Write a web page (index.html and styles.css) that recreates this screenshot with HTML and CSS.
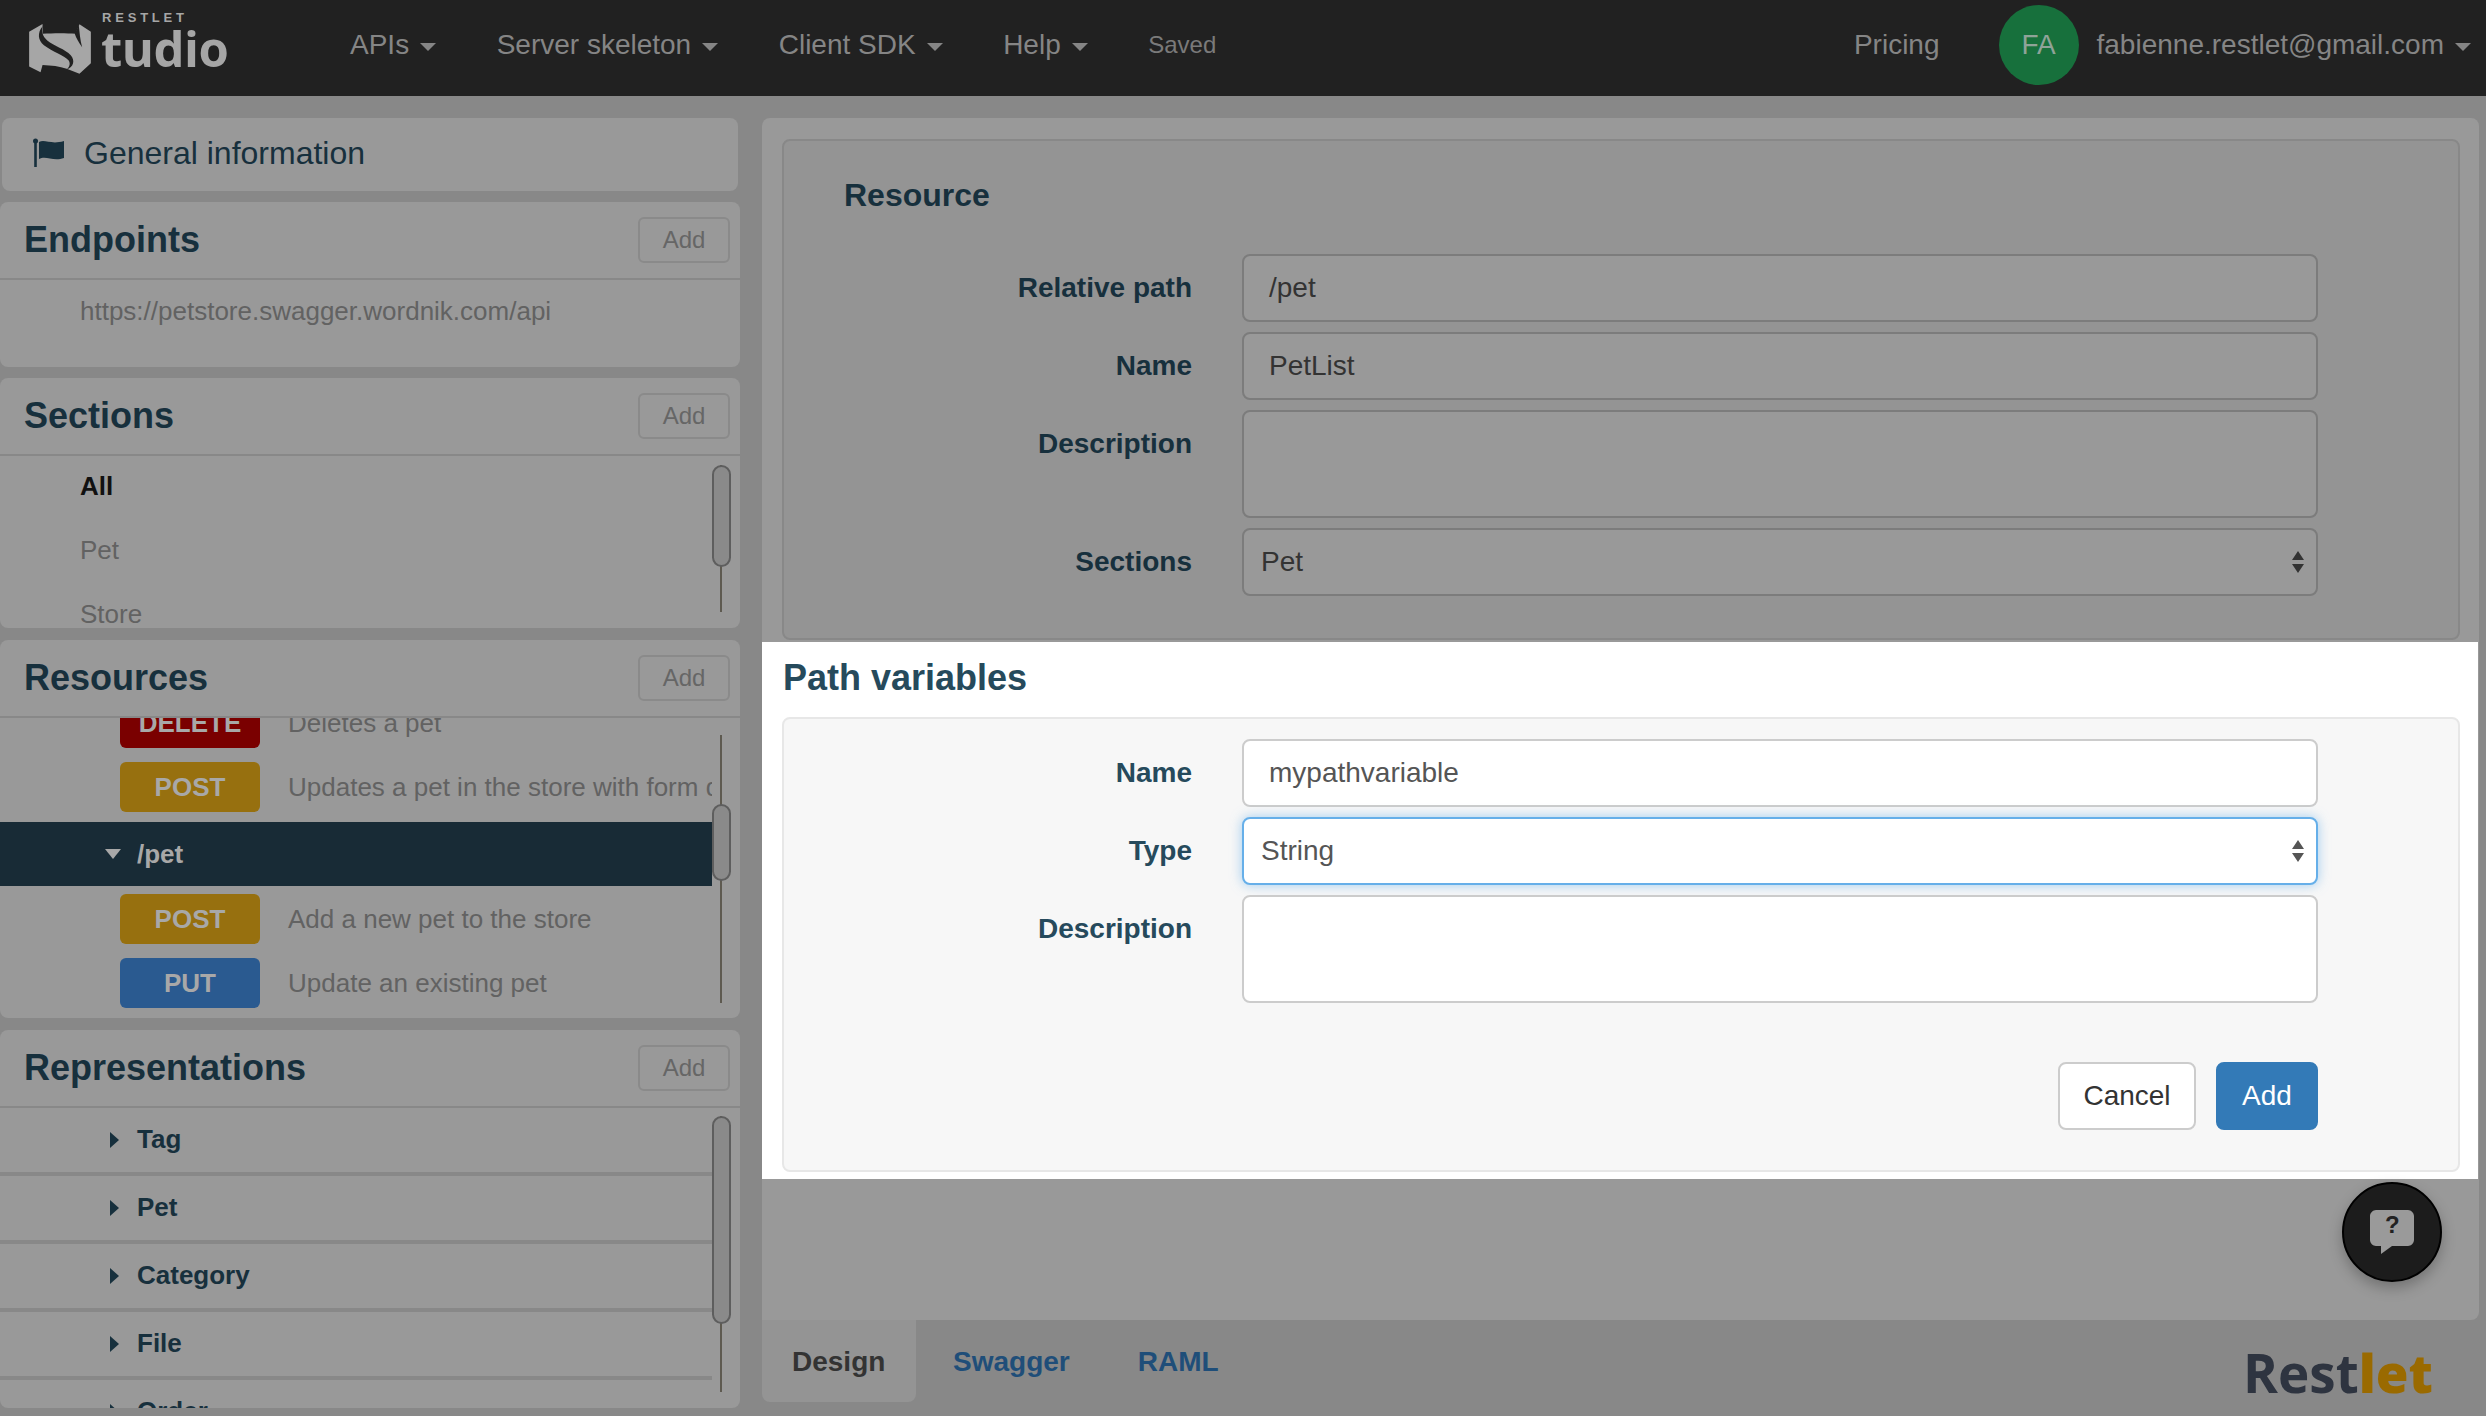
FILE: index.html
```html
<!DOCTYPE html>
<html lang="en">
<head>
  <meta charset="UTF-8">
  <title>Restlet Studio</title>
  <link rel="stylesheet" href="styles.css">
</head>
<body>
  <header class="topbar">
    <a class="logo">
      <svg class="logo-mark" viewBox="25 40 190 152">
        <path fill="#a6a6a6" d="M68 43L28 66V170L62 187L68 165C95 166 118 169 140 176L178 191L212 160V66L178 44L166 72C140 70 100 70 68 72Z"/>
        <path fill="#212121" d="M68 50C52 70 54 92 72 106C98 126 134 136 146 152C152 162 148 172 140 178C160 172 166 152 152 136C136 118 102 108 82 92C68 80 64 66 68 50Z"/>
        <path fill="#212121" d="M176 46C178 66 180 92 186 112C176 98 168 84 164 72Z"/>
      </svg>
      <span class="logo-small">RESTLET</span>
      <span class="logo-big">tudio</span>
    </a>
    <nav class="nav">
      <span class="nav-item">APIs<i class="caret"></i></span>
      <span class="nav-item">Server skeleton<i class="caret"></i></span>
      <span class="nav-item">Client SDK<i class="caret"></i></span>
      <span class="nav-item">Help<i class="caret"></i></span>
      <span class="saved">Saved</span>
    </nav>
    <div class="user">
      <span class="pricing">Pricing</span>
      <span class="avatar">FA</span>
      <span class="nav-item">fabienne.restlet@gmail.com<i class="caret"></i></span>
    </div>
  </header>

  <main class="layout">
    <aside class="sidebar">
      <div class="panel general">
        <svg class="flag" viewBox="0 0 32 30">
          <circle cx="2.5" cy="3" r="2.5" fill="#17303d"/>
          <rect x="1.2" y="3" width="2.6" height="26" fill="#17303d"/>
          <path fill="#17303d" d="M6 4C12 1 18 7 31 3V20C20 24 13 17 6 21Z"/>
        </svg>
        General information
      </div>

      <section class="panel endpoints">
        <div class="panel-head"><h2>Endpoints</h2><button class="btn-add">Add</button></div>
        <div class="plain-row">https://petstore.swagger.wordnik.com/api</div>
      </section>

      <section class="panel sections">
        <div class="panel-head"><h2>Sections</h2><button class="btn-add">Add</button></div>
        <div class="panel-body">
          <div class="plain-row selected">All</div>
          <div class="plain-row">Pet</div>
          <div class="plain-row">Store</div>
          <div class="scroll"><div class="thumb"></div></div>
        </div>
      </section>

      <section class="panel resources">
        <div class="panel-head"><h2>Resources</h2><button class="btn-add">Add</button></div>
        <div class="panel-body">
          <div class="res-list">
            <div class="method"><span class="badge delete">DELETE</span><span class="desc">Deletes a pet</span></div>
            <div class="method"><span class="badge post">POST</span><span class="desc">Updates a pet in the store with form data</span></div>
            <div class="res-active"><i class="caret-down"></i>/pet</div>
            <div class="method"><span class="badge post">POST</span><span class="desc">Add a new pet to the store</span></div>
            <div class="method"><span class="badge put">PUT</span><span class="desc">Update an existing pet</span></div>
          </div>
          <div class="scroll"><div class="thumb"></div></div>
        </div>
      </section>

      <section class="panel representations">
        <div class="panel-head"><h2>Representations</h2><button class="btn-add">Add</button></div>
        <div class="panel-body">
          <div class="rep-row"><i class="caret-right"></i>Tag</div>
          <div class="rep-row"><i class="caret-right"></i>Pet</div>
          <div class="rep-row"><i class="caret-right"></i>Category</div>
          <div class="rep-row"><i class="caret-right"></i>File</div>
          <div class="rep-row"><i class="caret-right"></i>Order</div>
          <div class="scroll"><div class="thumb"></div></div>
        </div>
      </section>
    </aside>

    <div class="content">
      <div class="editor">
        <div class="box box-dim">
          <h3 class="legend">Resource</h3>
          <div class="field"><label>Relative path</label><div class="input">/pet</div></div>
          <div class="field"><label>Name</label><div class="input">PetList</div></div>
          <div class="field"><label>Description</label><div class="input textarea"></div></div>
          <div class="field">
            <label>Sections</label>
            <div class="input select">Pet
              <svg class="updown" viewBox="0 0 12 22"><path d="M6 0L12 9H0ZM0 13H12L6 22Z"/></svg>
            </div>
          </div>
        </div>

        <div class="spot">
          <h2 class="spot-title">Path variables</h2>
          <div class="box box-light">
            <div class="field"><label>Name</label><div class="input">mypathvariable</div></div>
            <div class="field"><label>Type</label>
              <div class="input select focus">String
                <svg class="updown" viewBox="0 0 12 22"><path d="M6 0L12 9H0ZM0 13H12L6 22Z"/></svg>
              </div>
            </div>
            <div class="field"><label>Description</label><div class="input textarea"></div></div>
            <div class="actions">
              <button class="btn btn-cancel">Cancel</button>
              <button class="btn btn-primary">Add</button>
            </div>
          </div>
        </div>

        <a class="help">
          <svg viewBox="0 0 44 46" class="help-icon">
            <path fill="#9a9a9a" d="M6 0H38C41 0 44 3 44 6V30C44 33 41 36 38 36H22L11 44V36H6C3 36 0 33 0 30V6C0 3 3 0 6 0Z"/>
          </svg>
          <span class="help-mark">?</span>
        </a>
      </div>

      <div class="tabs">
        <span class="tab active">Design</span>
        <span class="tab swagger">Swagger</span>
        <span class="tab">RAML</span>
        <span class="brand">Rest<b>let</b></span>
      </div>
    </div>
  </main>
</body>
</html>
```

FILE: styles.css
```css
html, body {
  margin: 0;
  padding: 0;
  height: 1416px;
  overflow: hidden;
  background: #888;
  font-family: "Liberation Sans", Arial, sans-serif;
  font-size: 28px;
}

/* top bar */
.topbar {
  display: flex;
  align-items: center;
  box-sizing: border-box;
  height: 96px;
  padding-bottom: 6px;
  background: #212121;
  color: #858585;
}
.logo {
  position: relative;
  display: block;
  width: 322px;
  height: 90px;
  flex: none;
}
.logo-mark {
  position: absolute;
  left: 28px;
  top: 23px;
  width: 64px;
  height: 51px;
}
.logo-small {
  position: absolute;
  left: 102px;
  top: 11px;
  font-size: 13px;
  line-height: 14px;
  font-weight: bold;
  letter-spacing: 3.8px;
  color: #a6a6a6;
}
.logo-big {
  position: absolute;
  left: 101px;
  top: 28px;
  font-family: "Open Sans", sans-serif;
  font-size: 49px;
  line-height: 40px;
  font-weight: 700;
  letter-spacing: -.5px;
  color: #a6a6a6;
}
.nav {
  display: flex;
  align-items: center;
  gap: 60.5px;
  padding-left: 28px;
}
.nav-item {
  white-space: nowrap;
}
.caret {
  display: inline-block;
  margin-left: 11px;
  vertical-align: 3px;
  border-top: 8px solid #858585;
  border-left: 8px solid transparent;
  border-right: 8px solid transparent;
}
.saved {
  font-size: 24px;
  color: #7a7a7a;
}
.user {
  display: flex;
  align-items: center;
  margin-left: auto;
  padding-right: 15px;
}
.pricing {
  margin-right: 59px;
}
.avatar {
  display: flex;
  align-items: center;
  justify-content: center;
  width: 80px;
  height: 80px;
  margin-right: 18px;
  border-radius: 50%;
  background: #17703c;
  color: #8fa398;
}

/* sidebar */
.layout {
  display: flex;
  height: 1320px;
}
.sidebar {
  flex: none;
  width: 740px;
  margin-right: 22px;
  padding-top: 22px;
}
.panel {
  position: relative;
  overflow: hidden;
  margin-bottom: 11px;
  border-radius: 8px;
  background: #999;
}
.general {
  display: flex;
  align-items: center;
  box-sizing: border-box;
  height: 73px;
  margin-left: 2px;
  width: 736px;
  padding-bottom: 3px;
  font-size: 32px;
  color: #17303d;
}
.flag {
  width: 32px;
  height: 30px;
  margin: 0 19px 0 31px;
}
.endpoints { height: 165px; }
.sections { height: 250px; }
.resources { height: 378px; margin-top: 12px; }
.representations { height: 378px; margin-top: 12px; }
.panel-head {
  display: flex;
  align-items: center;
  justify-content: space-between;
  box-sizing: border-box;
  height: 78px;
  padding: 0 10px 0 24px;
  border-bottom: 2px solid #888;
}
.panel-head h2 {
  margin: 0;
  font-size: 36px;
  color: #17303d;
}
.btn-add {
  width: 92px;
  height: 46px;
  padding: 0;
  border: 2px solid #8a8a8a;
  border-radius: 6px;
  background: transparent;
  font: 24px "Liberation Sans", Arial, sans-serif;
  color: #666;
}
.panel-body {
  position: relative;
  height: 300px;
  overflow: hidden;
  font-size: 26px;
}
.plain-row {
  height: 64px;
  line-height: 62px;
  padding-left: 80px;
  font-size: 26px;
  color: #626262;
}
.sections .panel-body {
  height: 172px;
  margin-top: -1px;
}
.selected {
  font-weight: bold;
  color: #111;
}
.scroll {
  position: absolute;
  left: 720px;
  width: 2px;
  background: #5e5a50;
}
.thumb {
  position: absolute;
  left: -8px;
  box-sizing: border-box;
  width: 19px;
  border: 2px solid #5e5e5e;
  border-radius: 10px;
  background: #8a8a8a;
}
.sections .scroll { top: 10px; height: 147px; }
.sections .thumb { top: 0; height: 102px; }
.resources .scroll { top: 17px; height: 268px; }
.resources .thumb { top: 69px; height: 77px; }
.representations .scroll { top: 8px; height: 276px; }
.representations .thumb { top: 0; height: 208px; }

.res-list {
  width: 712px;
  height: 326px;
  margin-top: -27px;
  overflow: hidden;
}
.method {
  display: flex;
  align-items: center;
  height: 64px;
  padding-left: 120px;
  white-space: nowrap;
}
.badge {
  flex: none;
  width: 140px;
  height: 50px;
  margin-right: 28px;
  border-radius: 6px;
  line-height: 50px;
  text-align: center;
  font-weight: bold;
  color: #a8a8a8;
}
.delete { background: #7a0000; }
.post { background: #97700f; }
.put { background: #2a5a90; }
.desc { color: #626262; }
.res-active {
  display: flex;
  align-items: center;
  height: 64px;
  margin: 3px 0 1px;
  background: #182b36;
  font-weight: bold;
  color: #a8a8a8;
}
.caret-down {
  margin: 0 16px 0 105px;
  border-top: 10px solid #a8a8a8;
  border-left: 8px solid transparent;
  border-right: 8px solid transparent;
}
.rep-row {
  display: flex;
  align-items: center;
  box-sizing: border-box;
  width: 712px;
  height: 68px;
  padding-bottom: 1px;
  border-bottom: 4px solid #888;
  font-weight: bold;
  color: #17303d;
}
.caret-right {
  margin: 0 18px 0 110px;
  border-left: 9px solid #17303d;
  border-top: 8px solid transparent;
  border-bottom: 8px solid transparent;
}

/* right side */
.content {
  display: flex;
  flex-direction: column;
  flex: none;
  width: 1717px;
}
.editor {
  position: relative;
  box-sizing: border-box;
  height: 1202px;
  margin-top: 22px;
  padding-top: 21px;
  border-radius: 8px 8px 8px 0;
  background: #999;
}
.box {
  box-sizing: border-box;
  width: 1678px;
  margin-left: 20px;
  border-radius: 8px;
}
.box-dim {
  height: 501px;
  padding-top: 37px;
  border: 2px solid #888;
  background: #949494;
  color: #333;
}
.legend {
  height: 34px;
  margin: 0 0 42px 60px;
  font-size: 32px;
  line-height: 34px;
  color: #17303d;
}
.field {
  display: flex;
  margin-bottom: 10px;
}
.field label {
  flex: none;
  width: 408px;
  margin-right: 50px;
  padding-top: 18px;
  text-align: right;
  font-weight: bold;
  color: #17303d;
}
.input {
  position: relative;
  box-sizing: border-box;
  width: 1076px;
  height: 68px;
  padding-left: 25px;
  border: 2px solid #7c7c7c;
  border-radius: 8px;
  background: #999;
  line-height: 64px;
  color: #333;
}
.textarea {
  height: 108px;
}
.select {
  padding-left: 17px;
}
.updown {
  position: absolute;
  right: 12px;
  top: 21px;
  width: 12px;
  height: 22px;
  fill: #333;
}
.spot {
  width: 1716px;
  height: 537px;
  margin-top: 2px;
  background: #fff;
}
.spot-title {
  height: 75px;
  margin: 0 0 0 21px;
  font-size: 36px;
  line-height: 72px;
  color: #264a5c;
}
.box-light {
  height: 455px;
  padding-top: 20px;
  border: 2px solid #e7e7e7;
  background: #f7f7f7;
}
.box-light .field label {
  color: #264a5c;
}
.box-light .input {
  border-color: #ccc;
  background: #fff;
  color: #555;
}
.box-light .updown {
  fill: #555;
}
.box-light .input.focus {
  border-color: #66afe9;
  box-shadow: 0 0 12px rgba(102, 175, 233, .6);
}
.actions {
  display: flex;
  justify-content: flex-end;
  gap: 20px;
  width: 1534px;
  margin-top: 59px;
}
.btn {
  height: 68px;
  padding: 0;
  border-radius: 8px;
  font: 28px "Liberation Sans", Arial, sans-serif;
}
.btn-cancel {
  width: 138px;
  border: 2px solid #ccc;
  background: #fff;
  color: #333;
}
.btn-primary {
  width: 102px;
  border: 2px solid #337ab7;
  background: #337ab7;
  color: #fff;
}
.help {
  position: absolute;
  left: 1580px;
  top: 1064px;
  width: 100px;
  height: 100px;
  box-sizing: border-box;
  border: 2px solid #000;
  border-radius: 50%;
  background: #1c1c1c;
  box-shadow: 0 6px 14px rgba(0, 0, 0, .25);
}
.help-icon {
  position: absolute;
  left: 26px;
  top: 26px;
  width: 44px;
  height: 46px;
}
.help-mark {
  position: absolute;
  left: 41px;
  top: 27px;
  font-size: 24px;
  font-weight: bold;
  color: #222;
}

/* tabs */
.tabs {
  display: flex;
  align-items: flex-start;
  flex: 1;
}
.tab {
  padding: 26px 0 0;
  margin-right: 68px;
  font-weight: bold;
  color: #1f4e79;
}
.tab.active {
  box-sizing: border-box;
  width: 154px;
  height: 82px;
  margin-right: 37px;
  padding: 26px 0 0 30px;
  border-radius: 0 0 8px 8px;
  background: #949494;
  color: #333;
}
.brand {
  margin-left: auto;
  margin-right: 46px;
  margin-top: 22px;
  font-family: "Open Sans", sans-serif;
  font-size: 53px;
  font-weight: 700;
  line-height: 62px;
  color: #2e3440;
}
.brand b {
  color: #9a6a00;
}
```
